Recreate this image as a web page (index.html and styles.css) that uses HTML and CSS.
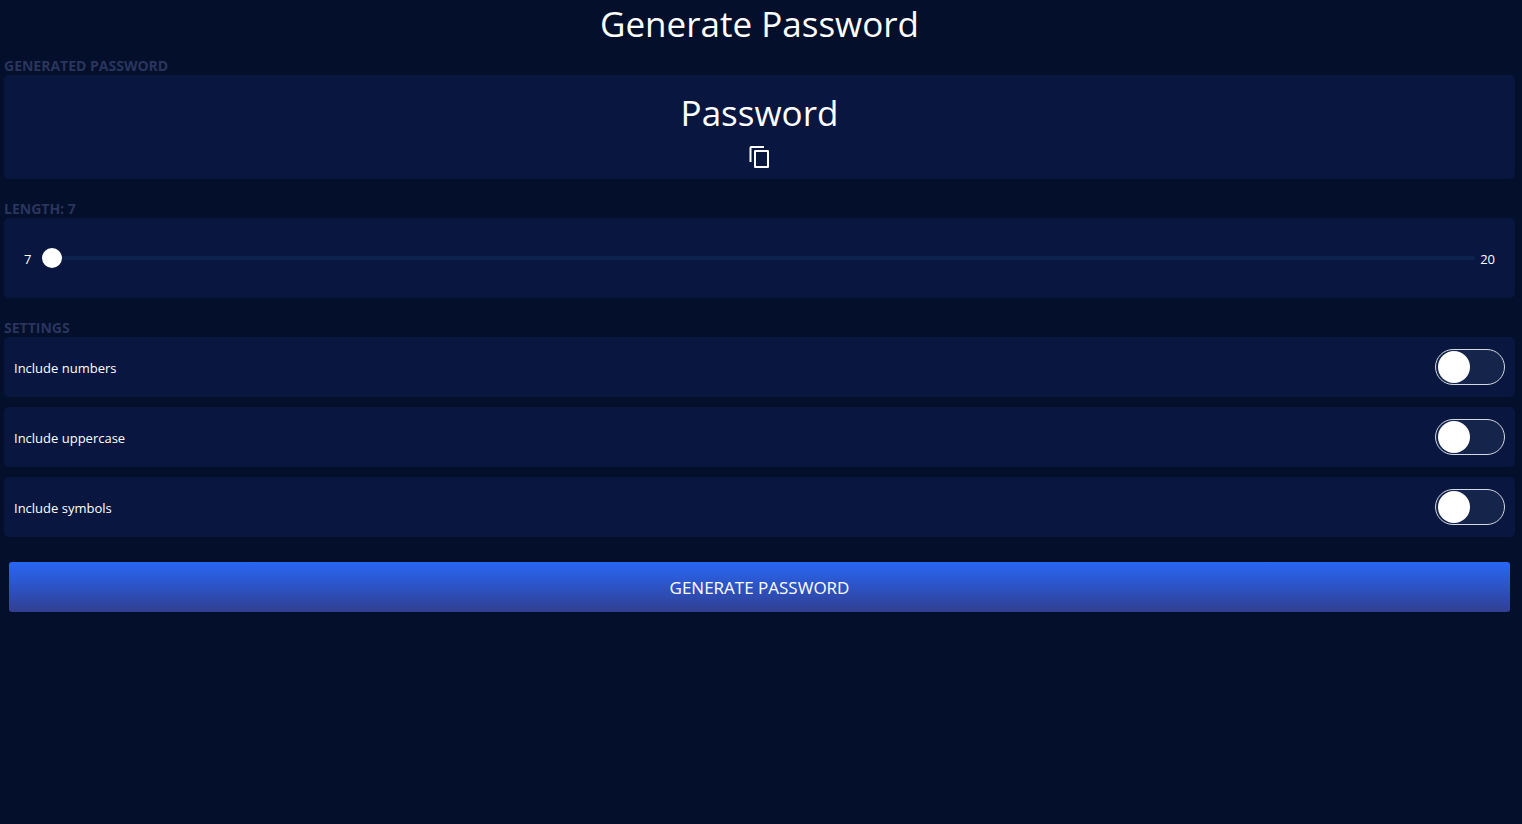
FILE: index.html
```html
<!DOCTYPE html>
<html lang="en">
<head>
<meta charset="utf-8">
<meta name="viewport" content="width=device-width, initial-scale=1">
<title>Generate Password</title>
<link rel="stylesheet" href="styles.css">
</head>
<body>
<main class="generator">
  <h1 class="title">Generate Password</h1>

  <section class="section">
    <h2 class="label">GENERATED PASSWORD</h2>
    <div class="card result">
      <output class="password">Password</output>
      <button class="copy" type="button" aria-label="Copy password">
        <svg width="24" height="24" viewBox="0 0 24 24" fill="#fff" aria-hidden="true"><path d="M16 1H3.500C2.400 1 1.500 1.500 1.500 3v14h2V3H16V1zm4 4H7.500c-1 0-1.500.5-1.500 1.500v15c0 1 .5 1.500 1.500 1.500H19.500c1 0 1.500-.5 1.500-1.500v-15C21 5.500 20.500 5 20 5zm-1 16H8V7h11v14z"/></svg>
      </button>
    </div>
  </section>

  <section class="section">
    <h2 class="label"><label for="length">LENGTH: 7</label></h2>
    <div class="card length">
      <span class="text">7</span>
      <input class="slider" id="length" type="range" min="7" max="20" value="7">
      <span class="text">20</span>
    </div>
  </section>

  <section class="section">
    <h2 class="label">SETTINGS</h2>
    <div class="settings">
      <div class="card setting">
        <label class="text" for="numbers">Include numbers</label>
        <input class="switch" id="numbers" type="checkbox">
      </div>
      <div class="card setting">
        <label class="text" for="uppercase">Include uppercase</label>
        <input class="switch" id="uppercase" type="checkbox">
      </div>
      <div class="card setting">
        <label class="text" for="symbols">Include symbols</label>
        <input class="switch" id="symbols" type="checkbox">
      </div>
    </div>
  </section>

  <button class="generate" type="button">GENERATE PASSWORD</button>
</main>
</body>
</html>
```
FILE: styles.css
```css
* {
  box-sizing: border-box;
}

body {
  margin: 0;
  background: #040f2c;
  color: #fff;
  font: 14px/18px "Segoe UI", "Open Sans", "Noto Sans", sans-serif;
}

.generator {
  display: flex;
  flex-direction: column;
  padding: 0 7px 0 4px;
}

.title {
  margin: 0 0 9px;
  font-size: 35px;
  line-height: 48px;
  font-weight: 400;
  text-align: center;
}

.section {
  margin-bottom: 21px;
}

.label {
  margin: 0;
  color: #2a355d;
  font-size: 14px;
  line-height: 18px;
  font-weight: 700;
}

.card {
  background: #091740;
  border-radius: 5px;
}

.result {
  display: flex;
  flex-direction: column;
  align-items: center;
  padding: 14px 10px 10px;
}

.password {
  font-size: 35px;
  line-height: 48px;
}

.copy {
  display: flex;
  margin-top: 8px;
  padding: 0;
  border: 0;
  background: none;
  cursor: pointer;
}

.text {
  padding-top: 2px;
  font-size: 13px;
}

.length {
  display: flex;
  align-items: center;
  gap: 5px;
  height: 80px;
  padding: 0 20px;
}

.slider {
  appearance: none;
  flex: 1;
  min-width: 0;
  height: 20px;
  margin: 0 0 0 6px;
  background: none;
  cursor: pointer;
}

.slider::-webkit-slider-runnable-track {
  height: 4px;
  border-radius: 2px;
  background: #0d234f;
}

.slider::-webkit-slider-thumb {
  appearance: none;
  width: 20px;
  height: 20px;
  margin-top: -8px;
  border-radius: 50%;
  background: #fff;
}

.settings {
  display: flex;
  flex-direction: column;
  gap: 10px;
}

.setting {
  display: flex;
  align-items: center;
  justify-content: space-between;
  height: 60px;
  padding: 0 10px;
}

.switch {
  appearance: none;
  display: flex;
  align-items: center;
  width: 70px;
  height: 36px;
  margin: 0;
  padding: 0 2px;
  border: 1px solid #d5d8e0;
  border-radius: 18px;
  background: #15244b;
  cursor: pointer;
}

.switch::before {
  content: "";
  width: 32px;
  height: 32px;
  border-radius: 50%;
  background: #fff;
}

.switch:checked {
  justify-content: flex-end;
}

.generate {
  height: 50px;
  margin: 4px 5px;
  padding: 2px 0 0;
  border: 0;
  border-radius: 3px;
  background: linear-gradient(#2867f5, #313f91);
  color: #fff;
  font: inherit;
  font-size: 17px;
  cursor: pointer;
}
```
